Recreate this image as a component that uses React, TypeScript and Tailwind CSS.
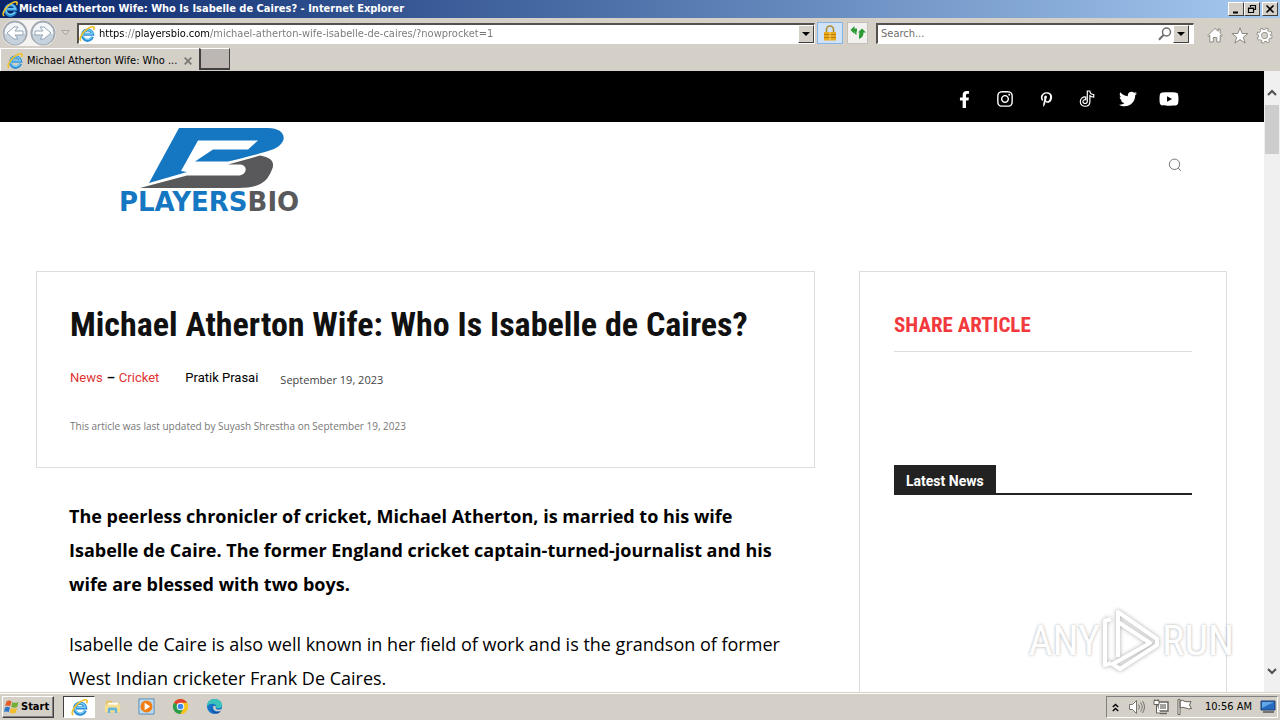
import type { ReactNode } from 'react';
import { FaFacebookF, FaInstagram, FaPinterestP, FaTwitter, FaYoutube } from 'react-icons/fa';

const ui = 'font-[DejaVu_Sans_Condensed,DejaVu_Sans,sans-serif] text-[11px] leading-4';

function IeIcon({ className }: { className: string }) {
  return (
    <svg viewBox="0 0 16 16" className={className} fill="none" aria-hidden="true">
      <path d="M13.500 10.800A5.200 5.200 0 1 1 13.700 8.300H5" stroke="#2b8fd6" strokeWidth="3" />
      <path d="M12.900 10.800A4.800 4.800 0 1 1 13.400 7.900H5.400" stroke="#7fd2f7" strokeWidth="1.200" />
      <path d="M2.200 14.800C-.4 14.200 2 8.400 6.200 4.600 9.800 1.300 14.300-.2 15 1.400c.3.800 0 1.700-.5 2.600" stroke="#f0c22a" strokeWidth="1.600" />
    </svg>
  );
}

function WindowButton({ label, children }: { label: string; children: ReactNode }) {
  return (
    <button aria-label={label} className="flex h-[14px] w-4 items-center justify-center border border-t-white border-l-white border-r-[#404040] border-b-[#404040] bg-[#d4d0c8]">
      <svg viewBox="0 0 10 10" className="size-[10px]" fill="none" stroke="#000" strokeWidth="1.6">{children}</svg>
    </button>
  );
}

function DropButton({ label }: { label: string }) {
  return (
    <button aria-label={label} className="flex h-[18px] w-4 shrink-0 items-center justify-center border border-t-white border-l-white border-r-[#404040] border-b-[#404040] bg-[#d4d0c8]">
      <svg viewBox="0 0 8 4" className="h-1 w-2"><path d="M0 0h8L4 4z" /></svg>
    </button>
  );
}

function NavCircle({ label, flip }: { label: string; flip?: boolean }) {
  return (
    <button aria-label={label} className="size-[26px]">
      <svg viewBox="0 0 26 26" className="size-[26px]" fill="none">
        <circle cx="13" cy="13" r="11.500" fill="#f3f6f9" stroke="#a3a9b0" strokeWidth="2" />
        <path d="M2.500 14a10.500 10.500 0 0 0 21 0z" fill="#c6d2dd" />
        <path
          d={flip ? 'M5 11h8L10 7h4l7 6-7 6h-4l3-4H5z' : 'M21 11h-8l3-4h-4l-7 6 7 6h4l-3-4h8z'}
          fill="#fff"
          stroke="#93a3b4"
        />
      </svg>
    </button>
  );
}

function TitleBar() {
  return (
    <div className="flex h-[18px] shrink-0 items-center bg-linear-to-r from-[#0a246a] to-[#a6caf0] pr-[2px] pl-[2px]">
      <IeIcon className="size-4" />
      <span className={`${ui} ml-px flex-1 font-bold whitespace-nowrap text-white`}>
        Michael Atherton Wife: Who Is Isabelle de Caires? - Internet Explorer
      </span>
      <WindowButton label="Minimize"><path d="M2 8.500h5" strokeWidth="2" /></WindowButton>
      <WindowButton label="Restore"><path d="M3.500 3V1.500h5v4H7M1.500 4h5v4.500h-5zM1 4.500h6M3 1.500h6" strokeWidth="1.200" /></WindowButton>
      <div className="w-[2px]" />
      <WindowButton label="Close"><path d="m1.500 1.500 7 7m0-7-7 7" /></WindowButton>
    </div>
  );
}

function Toolbar() {
  return (
    <div className="flex h-[30px] shrink-0 items-center">
      <div className="ml-[2px] flex h-[26px] gap-[2px] rounded-full bg-[#f4f3f1]">
        <NavCircle label="Back" />
        <NavCircle label="Forward" flip />
      </div>
      <button aria-label="Recent pages" className="ml-[3px] flex h-5 w-[13px] items-center justify-center">
        <svg viewBox="0 0 9 6" className="h-[6px] w-[9px]" fill="#d9d6d1" stroke="#aaa59e"><path d="M.8.500h7.400L4.500 5z" /></svg>
      </button>
      <div className="ml-[5px] flex h-[21px] flex-1 items-center border-t-2 border-l-2 border-r border-b border-t-[#55524d] border-l-[#55524d] border-r-white border-b-white bg-white">
        <IeIcon className="mr-1 size-4" />
        <input
          aria-label="Address"
          defaultValue="https://playersbio.com/michael-atherton-wife-isabelle-de-caires/?nowprocket=1"
          className={`${ui} min-w-0 flex-1 bg-linear-[90deg,#000_26px,#777_26px,#777_37px,#000_37px,#000_111px,#777_111px] bg-clip-text text-transparent outline-none`}
        />
        <DropButton label="Show address history" />
      </div>
      <button aria-label="Security report" className="ml-[2px] flex h-[22px] w-[26px] items-center justify-center border border-[#86b4e6] bg-[#cfe2f8]">
        <svg viewBox="0 0 14 16" className="h-4 w-[14px]" fill="none">
          <path d="M3.500 8V4.500a3.500 3.500 0 0 1 7 0V8" stroke="#b08a2e" strokeWidth="1.600" />
          <rect x="1" y="7" width="12" height="8.500" fill="#e9ab1e" />
          <path d="M1 9.500h12M1 12.500h12" stroke="#bd7c0c" />
          <path d="M7 7v8" stroke="#f9d366" />
        </svg>
      </button>
      <button aria-label="Refresh" className="ml-1 flex h-[22px] w-[21px] items-center justify-center border border-[#c4c0b8] bg-[#f2f1ef]">
        <svg viewBox="0 0 16 14" className="h-[14px] w-4" fill="#2c9a35">
          <path d="M7 2.500H4.500V0L.5 4l4 4V5.500H7z" />
          <path d="M4.500 5h2v4q-2-1-2-4z" />
          <path d="M9 13V10q0-2 .5-3.500L8 6.500 12 2.500l4 4h-2.500q0 5-4.500 6.500z" />
        </svg>
      </button>
      <div className="ml-2 flex h-[21px] w-[318px] items-center border-t-2 border-l-2 border-r border-b border-t-[#55524d] border-l-[#55524d] border-r-white border-b-white bg-white pr-1 pl-[3px]">
        <input aria-label="Search" placeholder="Search..." className={`${ui} min-w-0 flex-1 outline-none placeholder:text-[#6d6d6d]`} />
        <svg viewBox="0 0 14 14" className="mr-px size-[14px]" fill="none" stroke="#6e6e6e">
          <circle cx="8.500" cy="5" r="4" strokeWidth="1.500" />
          <path d="M5.500 8 1 12.800" strokeWidth="2" />
        </svg>
        <DropButton label="Search options" />
      </div>
      <div className="mr-[7px] ml-[13px] flex items-center gap-2 pt-1">
        <button aria-label="Home">
          <svg viewBox="0 0 16 16" className="size-4" fill="#fff" stroke="#8c8882"><path d="M.8 8.500 8 1.300l3.200 3V2h2v4.300l2 2.200-1 .8-1-1V15H9.800v-4.500H6.300V15H2.800V8.300l-1 1z" /></svg>
        </button>
        <button aria-label="Favorites" className="-mr-px">
          <svg viewBox="0 0 18 17" className="h-[17px] w-[18px]" fill="#fff" stroke="#8c8882"><path d="m9 .8 2.100 5.700h6l-4.800 3.700 1.800 5.900L9 12.600l-5.100 3.500 1.800-5.900L.9 6.500h6z" /></svg>
        </button>
        <button aria-label="Tools">
          <svg viewBox="0 0 18 18" className="size-[17px]" fill="none">
            <circle cx="9" cy="9" r="6.800" stroke="#8c8882" strokeWidth="3.400" strokeDasharray="3 2.340" />
            <circle cx="9" cy="9" r="4.800" fill="#d4d0c8" stroke="#8c8882" strokeWidth="4" />
            <circle cx="9" cy="9" r="6.600" stroke="#fff" strokeWidth="2" strokeDasharray="2 3.180" strokeDashoffset="-.4" />
            <circle cx="9" cy="9" r="4.800" stroke="#fff" strokeWidth="2.400" />
          </svg>
        </button>
      </div>
    </div>
  );
}

function TabStrip() {
  return (
    <div className="flex h-[23px] shrink-0">
      <div className="flex w-[199px] items-center border-t border-l border-white pt-px pl-[6px]">
        <IeIcon className="mr-1 size-4" />
        <span className={`${ui} flex-1 whitespace-nowrap`}>Michael Atherton Wife: Who ...</span>
        <button aria-label="Close tab" className="mr-[7px]">
          <svg viewBox="0 0 8 8" className="size-2" stroke="#7b7772" strokeWidth="1.800"><path d="m.7.700 6.600 6.600m0-6.600L.7 7.300" /></svg>
        </button>
      </div>
      <button aria-label="New tab" className="h-[22px] w-[31px] border border-t-white border-r border-b-2 border-l-2 border-r-[#404040] border-b-[#404040] border-l-[#404040] bg-[#bdb7b3]" />
    </div>
  );
}

function TiktokIcon() {
  return (
    <svg viewBox="0 0 16 18" className="h-[18px] w-4" fill="none" stroke="#fff" strokeWidth="1.200">
      <path d="M8.300 1h2.500c.1 2 1.500 3.400 3.900 3.500v2.600c-1.500 0-2.800-.5-3.800-1.300v5.600c0 6.400-9.600 6.400-9.600.3 0-3 2.300-5 5.400-4.700v2.700c-1.800-.3-2.800.7-2.800 2 0 2.500 4.400 2.500 4.400-.5z" />
    </svg>
  );
}

function SiteHeader() {
  const links: { name: string; icon: ReactNode }[] = [
    { name: 'Facebook', icon: <FaFacebookF className="size-[17px]" /> },
    { name: 'Instagram', icon: <FaInstagram className="size-[18px]" /> },
    { name: 'Pinterest', icon: <FaPinterestP className="size-[15px]" /> },
    { name: 'TikTok', icon: <TiktokIcon /> },
    { name: 'Twitter', icon: <FaTwitter className="size-[18px]" /> },
    { name: 'Youtube', icon: <FaYoutube className="size-[20px]" /> },
  ];

  return (
    <header>
      <nav className="flex h-[51px] items-center justify-end gap-[17px] bg-black pt-[5px] pr-[83px]">
        {links.map((link) => (
          <a key={link.name} href="#" aria-label={link.name} className="flex size-6 items-center justify-center text-white">
            {link.icon}
          </a>
        ))}
      </nav>
      <div className="flex items-start justify-between pt-1 pr-[82px] pl-[119px]">
        <a href="#" className="flex w-[178px] flex-col">
          <svg viewBox="0 0 178 64" className="h-16" aria-hidden="true">
            <path d="M60 2h89c17 0 22 13 6 21-8 3-30 9-46 12.500H76L94 23.500h35l10-9H79L62 45l6 1L30 57z" fill="#1577c2" />
            <path d="M109 38.500 141 29.500c12 2 15 7 12 14-5 13-13 18.500-34 18.500H21l47-12.500h51c8 0 11-9 3-11z" fill="#59595b" />
          </svg>
          <span className="-mt-[2px] font-[DejaVu_Sans,sans-serif] text-[26px] leading-7 font-bold text-[#1577c2]">
            PLAYERS<span className="text-[#59595b]">BIO</span>
          </span>
        </a>
        <button aria-label="Search site" className="mt-8">
          <svg viewBox="0 0 14 14" className="size-[14px]" fill="none" stroke="#777">
            <circle cx="6.500" cy="6.300" r="5.200" />
            <path d="m10.300 10 2.500 2.800" />
          </svg>
        </button>
      </div>
    </header>
  );
}

function Article() {
  return (
    <article className="min-w-0 flex-1 font-[Open_Sans,sans-serif]">
      <div className="h-[197px] border border-[#dddddd] px-[33px] pt-8">
        <h1 className="font-[Roboto_Condensed,Roboto,sans-serif] text-[34px] leading-10 font-bold whitespace-nowrap text-[#111]">
          Michael Atherton Wife: Who Is Isabelle de Caires?
        </h1>
        <div className="mt-6 flex items-start font-[Roboto,sans-serif] text-[13px] leading-5 text-black">
          <a href="#" className="text-[#dd3333]">News</a>
          <span className="mx-1 font-bold">–</span>
          <a href="#" className="text-[#dd3333]">Cricket</a>
          <a href="#" className="ml-[26px]">Pratik Prasai</a>
          <time className="ml-[22px] pt-[2px] font-[Open_Sans,sans-serif] text-[11px] text-[#444]">September 19, 2023</time>
        </div>
        <p className="mt-7 text-[10px] leading-4 text-[#777]">
          This article was last updated by Suyash Shrestha on September 19, 2023
        </p>
      </div>
      <div className="px-[33px] pt-[31px] text-[18px] leading-[34px] text-black">
        <p className="font-bold">
          The peerless chronicler of cricket, Michael Atherton, is married to his wife Isabelle de Caire. The former
          England cricket captain-turned-journalist and his wife are blessed with two boys.
        </p>
        <p className="mt-[26px]">
          Isabelle de Caire is also well known in her field of work and is the grandson of former West Indian cricketer
          Frank De Caires.
        </p>
      </div>
    </article>
  );
}

function Sidebar() {
  return (
    <aside className="h-[600px] w-[368px] shrink-0 border border-[#dddddd] px-[34px] pt-8">
      <h2 className="border-b border-[#dddddd] pt-[6px] pb-[11px] font-[Roboto_Condensed,Roboto,sans-serif] text-[21px] leading-[30px] font-bold text-[#f23a3e]">
        SHARE ARTICLE
      </h2>
      <div className="mt-[113px] flex border-b-2 border-[#222]">
        <h2 className="bg-[#222] px-3 pt-[6px] pb-[2px] font-[Roboto,sans-serif] text-[14px] leading-5 font-bold text-white">Latest News</h2>
      </div>
    </aside>
  );
}

function Scrollbar() {
  return (
    <div className="flex w-4 shrink-0 flex-col items-center bg-[#f0f0f0] pt-[18px] pb-[17px]">
      <svg viewBox="0 0 10 7" className="h-[7px] w-[10px]" fill="none" stroke="#505050" strokeWidth="2"><path d="m1 6 4-4 4 4" /></svg>
      <div className="mt-[9px] h-[49px] w-[14px] bg-[#cdcdcd]" />
      <svg viewBox="0 0 10 7" className="mt-auto h-[7px] w-[10px]" fill="none" stroke="#505050" strokeWidth="2"><path d="m1 1 4 4 4-4" /></svg>
    </div>
  );
}

function Watermark() {
  return (
    <div className="pointer-events-none absolute right-[46px] bottom-[19px] flex items-center gap-[2px] font-[Roboto_Condensed,Roboto,sans-serif] text-[42px] leading-[64px] text-white [text-shadow:0_0_3px_#aaa]">
      <span>ANY</span>
      <svg viewBox="0 0 58 64" className="h-16 w-[58px] drop-shadow-[0_0_2px_#aaa]" fill="none" stroke="#fff" strokeWidth="4" strokeLinejoin="round">
        <path d="M9 10 3 12v44l6-2M16 44V3l39 27v6L18 60l-6-4" />
        <path d="M16 13 48 34 9 56M16 20v28" />
      </svg>
      <span>RUN</span>
    </div>
  );
}

function Taskbar() {
  return (
    <footer className="flex h-7 shrink-0 items-center border-t border-[#d4d0c8] bg-[#d4d0c8] pr-[2px] pl-[2px] shadow-[inset_0_1px_0_#fff]">
      <button className={`${ui} mt-px flex h-[22px] w-[52px] items-center gap-px border border-t-white border-l-white border-r-[#404040] border-b-[#404040] pl-px font-bold shadow-[inset_-1px_-1px_0_#808080]`}>
        <svg viewBox="0 0 16 16" className="size-4" aria-hidden="true">
          <path d="M2.500 2.500Q5 .5 7.500 2.500L6.200 7.300Q3.800 5.700 1.200 7.300z" fill="#e45c27" />
          <path d="M8.500 3q2.500 1.700 6 0l-1.300 5Q10 9.400 7.200 7.700z" fill="#74ae35" />
          <path d="M1 8.500q2.500-1.500 5 0L4.700 13.300Q2.500 11.800 0 13z" fill="#2f78c8" />
          <path d="M7 9q3 1.500 6 0l-1.300 4.700q-3 1.600-6 0z" fill="#f1bd28" />
        </svg>
        Start
      </button>
      <button aria-label="Internet Explorer" className="mt-px ml-[9px] flex h-[22px] w-8 items-center justify-center border border-t-[#404040] border-l-[#404040] border-r-white border-b-white bg-white">
        <IeIcon className="size-[17px]" />
      </button>
      <div className="ml-[9px] flex items-center gap-[17px]">
        <button aria-label="File Explorer">
          <svg viewBox="0 0 18 18" className="size-[17px]">
            <path d="M2 3h6l1 2h7v10H2z" fill="#e5c15d" />
            <path d="M4 5h11v6H4z" fill="#fff" />
            <path d="M1 7h16v8H1z" fill="#f6df91" />
            <path d="M4 16v-4q0-2 2-2h6q2 0 2 2v4h-2.500v-3h-5v3z" fill="#62b6df" />
          </svg>
        </button>
        <button aria-label="Media Player">
          <svg viewBox="0 0 18 18" className="size-[17px]">
            <path d="M1 1h16v16H1z" fill="#bcdcf4" stroke="#5689b9" />
            <circle cx="9" cy="9" r="6.300" fill="#f07e13" />
            <path d="m7 5 6 4-6 4z" fill="#fff" />
          </svg>
        </button>
        <button aria-label="Chrome">
          <svg viewBox="0 0 18 18" className="size-[17px]">
            <circle cx="9" cy="9" r="8" fill="#f8c51c" />
            <path d="M9 9 2.070 5A8 8 0 0 1 15.930 5z" fill="#df4132" />
            <path d="M9 9 2.070 5A8 8 0 0 0 9 17l3.500-6z" fill="#2a9c4a" />
            <path d="M9 5h7a8 8 0 0 1-7 12l3.500-6z" fill="#f8c51c" />
            <circle cx="9" cy="9" r="4" fill="#fff" />
            <circle cx="9" cy="9" r="3" fill="#4386ee" />
          </svg>
        </button>
        <button aria-label="Edge">
          <svg viewBox="0 0 18 18" className="size-[17px]">
            <circle cx="9" cy="9" r="8" fill="#1674c9" />
            <path d="M1 9C1-1.500 17-1 17 7.500c0 4-5 4-6.500 2.500C12.500 6.500 5 4 1 9z" fill="#39c3ba" />
            <path d="M6.500 9c-1.500 5 5 8 9.500 4.500-.5 1-2 2.500-3.500 3C6 16 4.500 12 6.500 9z" fill="#154d9c" />
            <path d="M10.500 8.500c-1.500 3 1.500 5 5.500 3.500v1.500c-5 2-10-1-8-5z" fill="#d4d0c8" />
          </svg>
        </button>
      </div>
      <div className="mt-px ml-auto flex h-[22px] w-[172px] items-center border border-t-[#808080] border-l-[#808080] border-r-white border-b-white pr-px pl-[5px]">
        <button aria-label="Show hidden icons">
          <svg viewBox="0 0 7 9" className="h-[9px] w-[7px]" fill="none" stroke="#000" strokeWidth="1.400"><path d="m.8 4 2.700-2.600L6.200 4M.8 8l2.700-2.600L6.200 8" /></svg>
        </button>
        <svg viewBox="0 0 16 14" className="ml-[10px] h-[14px] w-4" fill="none" stroke="#77736d">
          <path d="M.5 4.500h3l4-4v13l-4-4h-3z" fill="#fff" />
          <path d="M9.500 4.500q2 2.500 0 5M11.500 2.500q3.500 4.500 0 9M13.500 1q4 6 0 12" />
        </svg>
        <svg viewBox="0 0 16 16" className="ml-2 size-4" fill="none" stroke="#66625d">
          <path d="M5 3h10v9H5z" fill="#fff" strokeWidth="1.400" />
          <path d="M7 5h6v5H7z" fill="#a5a19b" stroke="none" />
          <path d="M7 14.500h7" strokeWidth="1.400" />
          <path d="M1 1.500h5v4H1zM3.500 5.500V14h4M2 0v2M5 0v2" fill="#fff" />
        </svg>
        <svg viewBox="0 0 16 16" className="ml-2 size-4" fill="#fff" stroke="#66625d">
          <path d="M1 .5h2v15H1zM3 2q3-1.500 5 .5 3 .5 6 0L12.500 6l2 3.500q-3 1-6-.5Q6 7.500 3 9z" />
        </svg>
        <span className={`${ui} ml-auto whitespace-nowrap`}>10:56 AM</span>
        <svg viewBox="0 0 16 14" className="ml-2 h-[14px] w-4">
          <path d="M1 1h14v9H1z" fill="#246bc1" stroke="#1d3d70" />
          <path d="M2 2h12L2 8z" fill="#62a6e6" />
          <path d="M3 12h11" stroke="#555" strokeWidth="1.500" />
        </svg>
      </div>
    </footer>
  );
}

export default function App() {
  return (
    <div className="flex h-screen flex-col overflow-hidden bg-[#d4d0c8] text-black">
      <TitleBar />
      <Toolbar />
      <TabStrip />
      <div className="relative flex min-h-0 flex-1 bg-white">
        <main className="min-w-0 flex-1 overflow-hidden">
          <SiteHeader />
          <div className="flex items-start gap-11 pt-[55px] pr-[37px] pl-9">
            <Article />
            <Sidebar />
          </div>
        </main>
        <Scrollbar />
        <Watermark />
      </div>
      <Taskbar />
    </div>
  );
}
